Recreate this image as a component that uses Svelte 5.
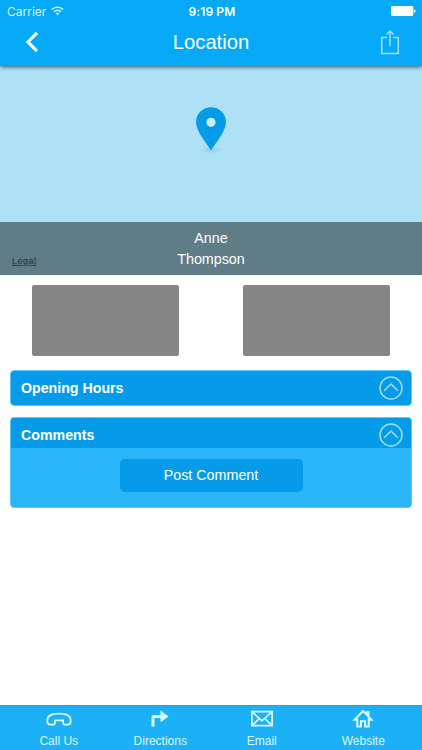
<script>
	let title = "Location";
	let firstName = "Anne";
	let lastName = "Thompson";
	let tabs = [
		{ icon: "phone", label: "Call Us" },
		{ icon: "turn", label: "Directions" },
		{ icon: "mail", label: "Email" },
		{ icon: "home", label: "Website" }
	];
</script>

{#snippet chevron()}
	<svg class="chevron" viewBox="0 0 24 24" width="24" height="24">
		<circle cx="12" cy="12" r="11" />
		<path d="M5.2 14.8 12 8l6.8 6.8" />
	</svg>
{/snippet}

<div class="screen">
	<header>
		<div class="status">
			<div class="carrier">
				<span>Carrier</span>
				<svg viewBox="0 0 13 10" width="13" height="10">
					<path d="M.8 3.6C4.2.4 8.8.4 12.2 3.6M2.9 5.8c2.2-2 5-2 7.2 0" fill="none" stroke="#e6fbff" stroke-width="1.4" />
					<path d="M4.5 7.3c1.2-1.1 2.8-1.1 4 0l-2 2z" fill="#e6fbff" />
				</svg>
			</div>
			<span class="time">9:19 PM</span>
			<div class="battery">
				<svg viewBox="0 0 25 10" width="25" height="10">
					<rect width="22.3" height="10" rx="1.2" fill="#fff" />
					<path d="M23 3.2c2 .5 2 3.1 0 3.6z" fill="#fff" />
				</svg>
			</div>
		</div>
		<div class="navbar">
			<button class="back" aria-label="Back">
				<svg viewBox="0 0 14 22" width="14" height="22">
					<path d="M12 1.8 3 11l9 9.2" fill="none" stroke="#f2fdff" stroke-width="3.2" />
				</svg>
			</button>
			<h1>{title}</h1>
			<button class="share" aria-label="Share">
				<svg viewBox="0 0 20 26" width="20" height="26">
					<path d="M7 8.5H1.7v16h16.6v-16H13M10 17V2.2M6.4 5.5 10 2l3.6 3.5" fill="none" stroke="#a2e1fc" stroke-width="1.5" />
				</svg>
			</button>
		</div>
	</header>

	<div class="map">
		<svg viewBox="0 0 32 50" width="32" height="50">
			<defs>
				<radialGradient id="shade">
					<stop offset="0" stop-color="#4f9fc3" stop-opacity=".3" />
					<stop offset="1" stop-color="#4f9fc3" stop-opacity="0" />
				</radialGradient>
			</defs>
			<ellipse cx="16" cy="43" rx="12" ry="4" fill="url(#shade)" />
			<path d="M16 43.6C12 36.5 1 24.5 1 15.2a15 15 0 0 1 30 0C31 24.5 20 36.500 16 43.6z" fill="#069be6" />
			<circle cx="16" cy="15.3" r="4.600" fill="#c6eefb" />
		</svg>
	</div>

	<div class="name">
		<a href="#legal">Legal</a>
		<div>{firstName}</div>
		<div>{lastName}</div>
	</div>

	<div class="photos">
		<div class="photo"></div>
		<div class="photo"></div>
	</div>

	<section class="panel hours">
		<div class="panel-head">
			<h2>Opening Hours</h2>
			{@render chevron()}
		</div>
	</section>

	<section class="panel comments">
		<div class="panel-head">
			<h2>Comments</h2>
			{@render chevron()}
		</div>
		<div class="panel-body">
			<button class="post">Post Comment</button>
		</div>
	</section>

	<nav>
		{#each tabs as tab}
			<button class="tab">
				<svg viewBox="0 0 26 20" width="26" height="20">
					{#if tab.icon === "phone"}
						<path d="M1.300 11.500C1.300 7 6 4.700 13 4.700s11.700 2.300 11.700 6.800c0 2.800-1 4.200-3 4.200h-2.400c-1.400 0-2.200-.8-2.200-2v-2.400H8.900v2.400c0 1.200-.8 2-2.200 2H4.300c-2 0-3-1.400-3-4.200z" stroke-width="1.800" />
					{:else if tab.icon === "turn"}
						<path d="M6 17.500V8.400q0-1 1-1H14" stroke-width="3" />
						<path class="solid" d="M13.500 1.600 21.500 7.400l-8 5.800z" />
					{:else if tab.icon === "mail"}
						<path d="M2.900 2.700h20.200v14H2.900zM2.900 2.700 13 11.800 23.100 2.700M2.900 16.700 10.200 9.600M23.100 16.700 15.800 9.600" stroke-width="1.800" />
					{:else}
						<path d="M13 2 4.600 10.800H7.300v6.800h3.600v-5.400h4.200v5.400h3.600v-6.800h2.700l-2.900-3V3.200h-2v2.200z" stroke-width="2" />
					{/if}
				</svg>
				<span>{tab.label}</span>
			</button>
		{/each}
	</nav>
</div>

<style>
	:global(body) {
		background: #fff;
	}

	.screen {
		box-sizing: border-box;
		display: flex;
		flex-direction: column;
		width: 422px;
		height: 750px;
		background: #fff;
		color: #fff;
		font-family: "Liberation Sans", Arial, sans-serif;
		overflow: hidden;
	}

	svg {
		display: block;
		flex: none;
	}

	button {
		margin: 0;
		padding: 0;
		border: 0;
		background: none;
		color: inherit;
		font: inherit;
	}

	h1, h2 {
		margin: 0;
	}

	header {
		flex: none;
		height: 66px;
		background: #05a9f6;
		box-shadow: 0 1px 4px rgba(0, 40, 60, 0.75);
		z-index: 1;
	}

	.status {
		display: grid;
		grid-template-columns: 1fr auto 1fr;
		align-items: center;
		height: 22px;
		padding: 0 6px 0 7px;
		font-family: Inter, sans-serif;
		font-size: 12px;
	}

	.carrier {
		display: flex;
		align-items: center;
		gap: 5px;
		color: #d8f5ff;
	}

	.time {
		padding-left: 1px;
		font-weight: 600;
		letter-spacing: 0.1px;
	}

	.battery {
		display: flex;
		justify-content: flex-end;
	}

	.navbar {
		display: flex;
		align-items: center;
		justify-content: space-between;
		height: 40px;
		padding: 0 22px 0 25px;
	}

	h1 {
		padding-left: 3px;
		font-size: 20.2px;
		font-weight: 400;
	}

	.map {
		flex: none;
		display: flex;
		justify-content: center;
		height: 156px;
		padding-top: 41px;
		box-sizing: border-box;
		background: #afe1f6;
	}

	.name {
		position: relative;
		flex: none;
		height: 53px;
		padding-top: 6px;
		box-sizing: border-box;
		background: #607c87;
		font-size: 14.3px;
		line-height: 21px;
		text-align: center;
	}

	/* map attribution sits over the name bar */
	.name a {
		position: absolute;
		left: 12px;
		bottom: 8px;
		color: #35454c;
		font-size: 9px;
		line-height: 12px;
		letter-spacing: 0.5px;
		-webkit-text-stroke: 0.3px #35454c;
	}

	.photos {
		display: flex;
		justify-content: space-between;
		padding: 10.4px 32px 0 32.4px;
	}

	.photo {
		width: 147px;
		height: 71px;
		border-radius: 2px;
		background: #858585;
	}

	.panel {
		margin: 0 10px;
		border: 1px solid #5cc8f9;
		border-radius: 4px;
		background: #29b5f7;
		overflow: hidden;
	}

	.hours {
		margin-top: 14px;
	}

	.comments {
		margin-top: 10.6px;
	}

	.panel-head {
		display: flex;
		align-items: center;
		justify-content: space-between;
		height: 34px;
		padding: 0 8px 0 10px;
		background: #059be8;
	}

	.comments .panel-head {
		align-items: flex-start;
		height: 30px;
	}

	.comments h2 {
		line-height: 34px;
	}

	.comments .chevron {
		margin-top: 5px;
	}

	h2 {
		font-size: 14.2px;
		font-weight: 700;
	}

	.chevron {
		fill: none;
		stroke: #9ddffb;
		stroke-width: 1.5;
	}

	.panel-body {
		display: flex;
		justify-content: center;
		height: 59px;
		padding-top: 11px;
		box-sizing: border-box;
	}

	.post {
		width: 183px;
		height: 33px;
		border-radius: 5px;
		background: #059be8;
		font-size: 14.3px;
	}

	nav {
		display: flex;
		flex: none;
		height: 45px;
		margin-top: auto;
		padding: 0 8px;
		border-top: 1px solid #1aa3e4;
		box-sizing: border-box;
		background: #1cb0f6;
	}

	.tab {
		display: flex;
		flex: 1 0 0;
		flex-direction: column;
		align-items: center;
		padding-top: 3px;
		font-size: 12px;
	}

	.tab svg {
		fill: none;
		stroke: #d9f8ff;
	}

	.tab .solid {
		fill: #d9f8ff;
		stroke: none;
	}

	.tab span {
		margin-top: 5px;
		color: #dcf6ff;
		line-height: 14px;
	}
</style>
